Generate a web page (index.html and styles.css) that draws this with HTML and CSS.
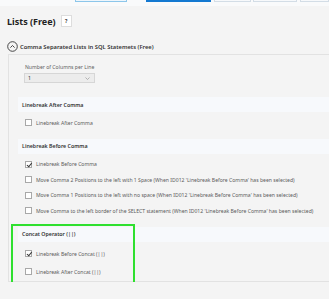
FILE: index.html
```html
<!DOCTYPE html>
<html lang="en">
<head>
    <meta charset="UTF-8">
    <title>Lists (Free)</title>
    <link rel="stylesheet" href="styles.css">
</head>
<body>
    <div class="topbar">
        <span class="tab tab-one"></span>
        <span class="tab tab-active"></span>
        <span class="tab tab-three"></span>
        <span class="tab tab-four"></span>
        <span class="tab tab-five"></span>
    </div>

    <div class="title-row">
        <h1>Lists (Free)</h1>
        <span class="help">?</span>
    </div>

    <div class="section-toggle">
        <svg class="toggle-icon" width="11" height="11" viewBox="0 0 11 11">
            <circle cx="5.5" cy="5.5" r="4.8" fill="none" stroke="#333" stroke-width="0.9"/>
            <path d="M3.4 6.6 L5.5 4.5 L7.6 6.6" fill="none" stroke="#333" stroke-width="0.9"/>
        </svg>
        <span>Comma Separated Lists in SQL Statemets (Free)</span>
    </div>

    <div class="panel">
        <div class="field">
            <label>Number of Columns per Line</label>
            <div class="select">
                <span>1</span>
                <svg width="5" height="3" viewBox="0 0 5 3"><path d="M0.5 0.5 L2.5 2.5 L4.5 0.5" fill="none" stroke="#999" stroke-width="0.7"/></svg>
            </div>
        </div>

        <div class="group">
            <div class="group-head">Linebreak After Comma</div>
            <div class="row"><span class="box"></span>Linebreak After Comma</div>
        </div>

        <div class="group">
            <div class="group-head">Linebreak Before Comma</div>
            <div class="row"><span class="box checked"></span>Linebreak Before Comma</div>
            <div class="row"><span class="box"></span>Move Comma 2 Positions to the left with 1 Space (When ID012 'Linebreak Before Comma' has been selected)</div>
            <div class="row"><span class="box"></span>Move Comma 1 Positions to the left with no space (When ID012 'Linebreak Before Comma' has been selected)</div>
            <div class="row"><span class="box"></span>Move Comma to the left border of the SELECT statement (When ID012 'Linebreak Before Comma' has been selected)</div>
        </div>

        <div class="group concat">
            <div class="highlight"></div>
            <div class="group-head">Concat Operator (||)</div>
            <div class="row"><span class="box checked"></span>Linebreak Before Concat (||)</div>
            <div class="row"><span class="box"></span>Linebreak After Concat (||)</div>
        </div>
    </div>
</body>
</html>
```

FILE: styles.css
```css
body {
    margin: 0;
    background: #f4f4f4;
    font-family: "Noto Sans", sans-serif;
    color: #555;
    overflow: hidden;
}
.topbar {
    display: flex;
    height: 6px;
    background: #f9fafb;
}
.tab {
    height: 2px;
    box-sizing: border-box;
    border: 1px solid #d3dde6;
    border-top: none;
    background: #f7f9fb;
}
.tab-one {
    margin-left: 75px;
    width: 52px;
    border-color: #8cc6ea;
    background: #eef6fc;
}
.tab-active {
    margin-left: 19px;
    width: 65px;
    border-color: #1479d1;
    background: #1479d1;
}
.tab-three {
    margin-left: 3px;
    width: 37px;
}
.tab-four {
    margin-left: 2px;
    width: 44px;
}
.tab-five {
    margin-left: 3px;
    flex: 1;
}
.title-row {
    display: flex;
    align-items: center;
    gap: 5px;
    margin-top: 9px;
    padding-left: 7px;
    height: 12px;
}
h1 {
    margin: 0;
    font-size: 9px;
    font-weight: bold;
    color: #222;
}
.help {
    width: 11px;
    height: 12px;
    box-sizing: border-box;
    border: 1px solid #ddd;
    background: #fff;
    font-size: 5px;
    font-weight: bold;
    color: #333;
    display: flex;
    align-items: center;
    justify-content: center;
}
.section-toggle {
    display: flex;
    align-items: center;
    gap: 2px;
    margin-top: 14px;
    padding-left: 7px;
    height: 11px;
    font-size: 5.8px;
    font-weight: 600;
    color: #333;
}
.panel {
    margin-top: 2px;
    margin-left: 8px;
    border: 1px solid #e2e2e2;
    border-right: none;
    padding: 0 0 0 9px;
}
.field {
    padding: 8px 0 0 6px;
    height: 42px;
    box-sizing: border-box;
}
.field label {
    display: block;
    font-size: 5.1px;
    line-height: 8px;
    color: #5e5e5e;
    padding-left: 1px;
}
.select {
    margin-top: 2px;
    width: 71px;
    height: 10px;
    box-sizing: border-box;
    border: 1px solid #d6d6d6;
    background: #ececec;
    display: flex;
    align-items: center;
    justify-content: space-between;
    padding: 0 4px 0 3px;
    font-size: 5.2px;
    color: #333;
}
.group {
    margin-bottom: 8px;
}
.concat {
    margin-bottom: 0;
    position: relative;
}
.group-head {
    height: 15px;
    display: flex;
    align-items: center;
    padding-left: 4px;
    background: #f7f9fc;
    font-size: 5.3px;
    font-weight: 600;
    color: #333;
    margin-bottom: 3px;
}
.row {
    height: 15.5px;
    display: flex;
    align-items: center;
    padding-left: 7px;
    font-size: 5.1px;
    color: #5a5a5a;
    white-space: nowrap;
}
.box {
    width: 7px;
    height: 7px;
    box-sizing: border-box;
    border: 1px solid #a8a8a8;
    background: #fff;
    margin-right: 4px;
    flex-shrink: 0;
    position: relative;
}
.box.checked::after {
    content: "";
    position: absolute;
    left: 1.5px;
    top: 0;
    width: 2px;
    height: 3.5px;
    border: solid #333;
    border-width: 0 1px 1px 0;
    transform: rotate(40deg);
}
.concat .row {
    height: 18px;
}
.highlight {
    position: absolute;
    left: -7px;
    top: -3px;
    width: 124px;
    height: 62px;
    box-sizing: border-box;
    border: 2px solid #2fe02f;
    pointer-events: none;
}
```
